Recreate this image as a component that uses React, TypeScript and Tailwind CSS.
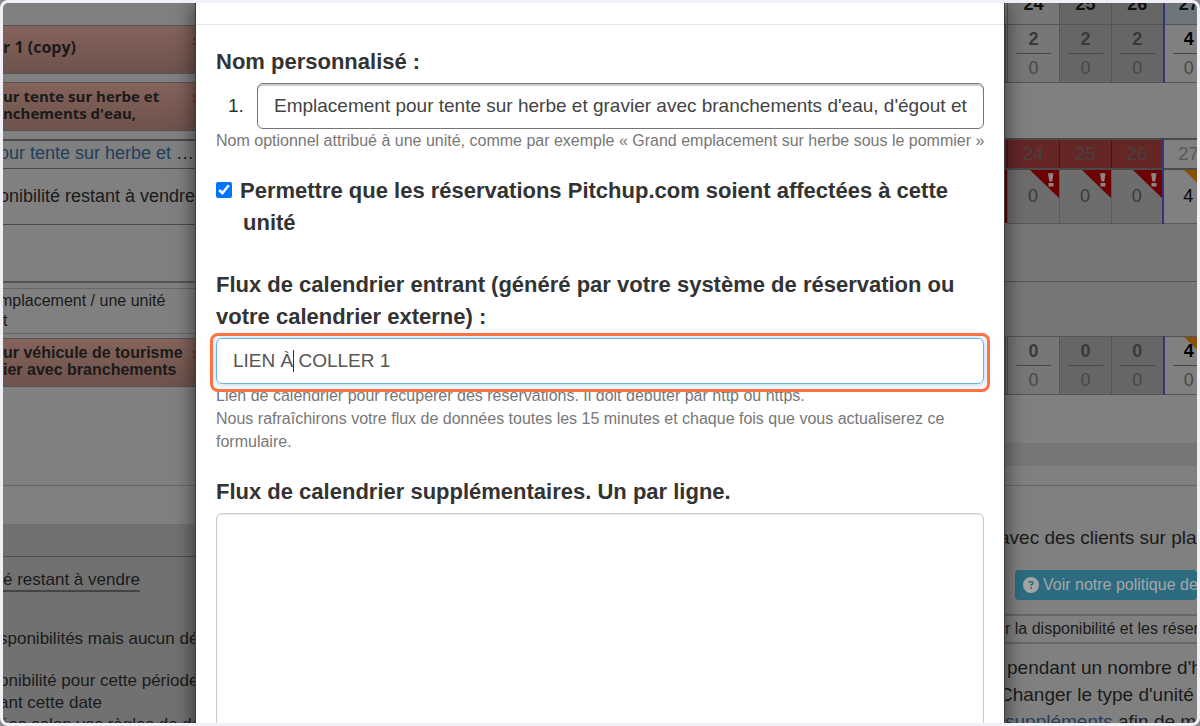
import { useState } from 'react';
import { FaCircleQuestion } from 'react-icons/fa6';

interface StockRow {
  free: string;
  booked: string;
}

const days = ['24', '25', '26', '27'];
const firstUnit: StockRow[] = [
  { free: '2', booked: '0' },
  { free: '2', booked: '0' },
  { free: '2', booked: '0' },
  { free: '4', booked: '0' },
];
const secondUnit: StockRow[] = [
  { free: '0', booked: '0' },
  { free: '0', booked: '0' },
  { free: '0', booked: '0' },
  { free: '4', booked: '0' },
];
const remaining = ['0', '0', '0', '4'];

function cellTone(index: number) {
  if (index === 3) return 'bg-[#808080] border-l-2 border-l-[#34347c]';
  if (index === 0) return 'bg-[#777777]';
  return 'bg-[#666666]';
}

function UnitPanel({ lines, textClass }: { lines: string[]; textClass: string }) {
  return (
    <div className="flex h-[49px] items-center border-y border-[#545454] bg-linear-to-b from-[#84635b] to-[#6e524c] leading-[17px] font-bold whitespace-nowrap text-[#1a1a1a]">
      <div className={`flex-1 pb-1 ${textClass}`}>
        {lines.map((line) => (
          <p key={line}>{line}</p>
        ))}
      </div>
      <span className="-mr-1.5 self-start pt-1 text-base font-normal text-[#8c1010]">×</span>
    </div>
  );
}

function Corner({ warn }: { warn?: boolean }) {
  return (
    <svg viewBox="0 0 29 28" className="absolute top-0 right-0 h-7 w-[29px]" aria-hidden="true">
      <path d="M0 0H29V28Z" fill={warn ? '#8a5200' : '#6d0000'} />
      {!warn && (
        <path d="M18 3.5Q20.5 2.5 23.5 3.5L22.3 11.5H19.3ZM18.5 13H23.5V16.5H18.5Z" fill="#8f8585" />
      )}
    </svg>
  );
}

function DayColumns() {
  return (
    <colgroup>
      <col className="w-0.5" />
      <col className="w-[52px]" />
      <col className="w-[52px]" />
      <col className="w-[52px]" />
      <col className="w-[50px]" />
    </colgroup>
  );
}

function StockTable({ rows, header }: { rows: StockRow[]; header?: boolean }) {
  return (
    <table className="w-[208px] table-fixed border-collapse text-center text-lg">
      <DayColumns />
      {header && (
        <thead>
          <tr className="h-[37px] text-[#111111]">
            <td className="bg-[#777777]" />
            {days.map((day, i) => (
              <th
                key={day}
                className={`border border-[#555555] p-0 pb-1 font-bold ${i === 3 ? 'bg-[#6d767b] border-l-2 border-l-[#34347c]' : cellTone(i)}`}
              >
                {day}
              </th>
            ))}
          </tr>
        </thead>
      )}
      <tbody>
        <tr className="h-[57px]">
          <td className="border border-[#555555] bg-[#777777] p-0" />
          {rows.map((row, i) => (
            <td key={i} className={`relative border border-[#555555] p-0 leading-7 ${cellTone(i)}`}>
              {i === 3 && !header && <Corner warn />}
              <div className={`relative mx-2 border-b border-[#484848] font-bold ${i === 3 ? 'text-black' : 'text-[#3a3a3a]'}`}>
                {row.free}
              </div>
              <div className="text-[#484848]">{row.booked}</div>
            </td>
          ))}
        </tr>
      </tbody>
    </table>
  );
}

function RemainingTable() {
  return (
    <table className="w-[208px] table-fixed border-collapse text-center text-lg">
      <DayColumns />
      <thead>
        <tr className="h-[30px] border-y-2 border-[#4a4a4a]">
          <td className="bg-[#652626] p-0" />
          {days.map((day, i) => (
            <th
              key={day}
              className={`border-l p-0 text-[19px] leading-6 font-normal ${i === 3 ? 'border-l-2 border-l-[#34347c] bg-[#808080] text-[#5a5a5a]' : 'border-l-[#401818] bg-[#652626] text-[#4a4040]'}`}
            >
              {day}
            </th>
          ))}
        </tr>
      </thead>
      <tbody>
        <tr className="h-[54px]">
          <td className="bg-[#6d0000] p-0" />
          {remaining.map((value, i) => (
            <td
              key={i}
              className={`relative border border-[#5a5a5a] p-0 ${i === 3 ? 'border-l-2 border-l-[#34347c] bg-[#808080] text-black' : 'bg-[#6d6d6d] text-[#3a3a3a]'}`}
            >
              <Corner warn={i === 3} />
              <span className="relative">{value}</span>
            </td>
          ))}
        </tr>
      </tbody>
    </table>
  );
}

function LeftPage() {
  return (
    <div className="-ml-1 min-w-0 overflow-hidden bg-[#808080] text-lg whitespace-nowrap text-[#1a1a1a]">
      <div className="flex flex-col gap-2 pt-[22px] pb-2">
        <UnitPanel lines={['r 1 (copy)']} textClass="pl-1 text-base leading-[17px] font-['Open_Sans',sans-serif]" />
        <UnitPanel
          lines={['ur tente sur herbe et', "nchements d'eau,"]}
          textClass="pl-1 text-[15px] leading-[17px] font-['Open_Sans',sans-serif]"
        />
      </div>
      <div className="h-[30px] border-t-2 border-b border-[#4a4a4a] leading-[25px]">
        <a href="#unite" className="text-[#1f3f5c]">our tente sur herbe et</a> …
      </div>
      <p className="h-14 border-b border-[#4a4a4a] leading-[54px]">onibilité restant à vendre</p>
      <div className="h-[58px] border-b-2 border-[#545454]" />
      <div className="mt-[5px] border-y border-[#666666] py-0.5 text-base leading-5">
        <p>mplacement / une unité</p>
        <p className="pl-1">t</p>
      </div>
      <div className="pt-1">
        <UnitPanel lines={['ur véhicule de tourisme', 'ier avec branchements']} textClass="pl-1 text-base leading-[17px]" />
      </div>
      <div className="h-[98px]" />
      <div className="h-[39px] border-t border-[#666666]" />
      <div className="h-[33px] border-b border-[#4f4f4f] bg-[#717171]" />
      <div className="bg-[#717171] pt-3 pb-10 text-[17px] leading-[22px]">
        <p className="mb-9">
          <span className="inline-block border-b-2 border-[#444444] pl-1 leading-5">é restant à vendre</span>
        </p>
        <p className="mb-5">sponibilités mais aucun départ</p>
        <p>onibilité pour cette période</p>
        <p>ant cette date</p>
        <p>ées selon vos règles de départ</p>
      </div>
    </div>
  );
}

function RightPage() {
  return (
    <div className="min-w-0 overflow-hidden bg-[#808080] text-[19px] whitespace-nowrap text-[#1a1a1a]">
      <div className="-mt-4">
        <StockTable header rows={firstUnit} />
      </div>
      <div className="h-[55px]" />
      <RemainingTable />
      <div className="h-[58px] border-b border-[#555555] bg-[#777777]" />
      <div className="h-[54px] bg-[#777777]" />
      <StockTable rows={secondUnit} />
      <div className="h-12" />
      <div className="h-[23px] bg-[#777777]" />
      <div className="h-[20px] border-b border-[#666666]" />
      <div className="-ml-1.5 pt-9">
        <p className="leading-8">avec des clients sur place</p>
        <a
          href="#politique"
          className="mt-4 ml-4 flex h-[30px] items-center gap-1 rounded bg-[#2d6c80] pl-2 text-base text-[#a6a6a6]"
        >
          <FaCircleQuestion className="size-4 shrink-0" />
          Voir notre politique de
        </a>
        <p className="mt-3.5 border-y-2 border-[#666666] pl-1.5 text-base leading-[26px]">r la disponibilité et les réservations</p>
        <p className="mt-2.5 pl-2 leading-[27px]">pendant un nombre d'heures</p>
        <p className="leading-[27px]">Changer le type d'unité si</p>
        <p className="pl-1.5 leading-[27px]">
          <a href="#supplements" className="text-[#1f3f5c]">suppléments</a> afin de modifier
        </p>
      </div>
    </div>
  );
}

function UnitDialog() {
  const [name, setName] = useState("Emplacement pour tente sur herbe et gravier avec branchements d'eau, d'égout et");
  const [feed, setFeed] = useState('LIEN À COLLER 1');
  const [allow, setAllow] = useState(true);

  return (
    <div
      role="dialog"
      className="relative z-10 overflow-y-clip border-x border-[#3c3c3c] bg-white text-[#333333] shadow-[0_0_20px_rgba(0,0,0,0.6)]"
    >
      <div className="h-[22px] border-b border-[#e5e5e5]" />
      <form className="px-5 pt-[21px]">
        <label htmlFor="unit-name" className="block text-[22px] leading-8 font-bold">
          Nom personnalisé :
        </label>
        <div className="mt-[5px] flex items-center">
          <span className="w-[41px] pl-3 text-[19px]">1.</span>
          <input
            id="unit-name"
            type="text"
            value={name}
            onChange={(e) => setName(e.target.value)}
            className="h-[46px] min-w-0 flex-1 rounded-md border border-[#767676] px-4 text-[19px] text-[#444444] shadow-[inset_0_2px_1px_rgba(0,0,0,0.2)] outline-none"
          />
        </div>
        <p className="text-base leading-[23px] whitespace-nowrap text-[#777777]">
          Nom optionnel attribué à une unité, comme par exemple « Grand emplacement sur herbe sous le pommier »
        </p>

        <label className="mt-[23px] block pl-[27px] -indent-[27px] text-[22px] leading-8 font-bold">
          <input
            type="checkbox"
            checked={allow}
            onChange={(e) => setAllow(e.target.checked)}
            className="mr-2 size-4 accent-[#0075ff]"
          />
          Permettre que les réservations Pitchup.com soient affectées à cette unité
        </label>

        <label htmlFor="unit-feed" className="mt-[30px] block text-[22px] leading-8 font-bold">
          Flux de calendrier entrant (généré par votre système de réservation ou votre calendrier externe) :
        </label>
        <div className="relative mt-[5px]">
          <input
            id="unit-feed"
            type="text"
            value={feed}
            onChange={(e) => setFeed(e.target.value)}
            className="block h-[46px] w-full rounded-md border border-[#66afe9] px-4 text-[19px] text-[#555555] shadow-[0_0_8px_rgba(102,175,233,0.6)] outline-none"
          />
          <span className="absolute top-3 left-[77px] h-[22px] w-px bg-[#333333]" />
          <span className="pointer-events-none absolute -inset-x-1.5 -top-[5px] -bottom-2 rounded-lg border-3 border-[#ff7043]" />
        </div>
        <p className="text-base leading-[23px] text-[#777777]">
          Lien de calendrier pour récupérer des réservations. Il doit débuter par http ou https.
          <br />
          Nous rafraîchirons votre flux de données toutes les 15 minutes et chaque fois que vous actualiserez ce
          formulaire.
        </p>

        <label htmlFor="more-feeds" className="mt-[23px] block text-[22px] leading-8 font-bold">
          Flux de calendrier supplémentaires. Un par ligne.
        </label>
        <textarea
          id="more-feeds"
          className="mt-[5px] block h-80 w-full resize-none rounded-md border border-[#cccccc] px-4 py-3 text-[19px] shadow-[inset_0_1px_1px_rgba(0,0,0,0.08)] outline-none"
        />
      </form>
    </div>
  );
}

export default function App() {
  return (
    <main className="h-screen bg-[#8a8a90] font-['Liberation_Sans',Arial,sans-serif]">
      <div className="h-full overflow-hidden rounded-lg border-3 border-[#f2f0f7]">
        <div className="grid h-full grid-cols-[minmax(0,1fr)_810px_minmax(0,1fr)] overflow-hidden rounded-md">
          <LeftPage />
          <UnitDialog />
          <RightPage />
        </div>
      </div>
    </main>
  );
}
